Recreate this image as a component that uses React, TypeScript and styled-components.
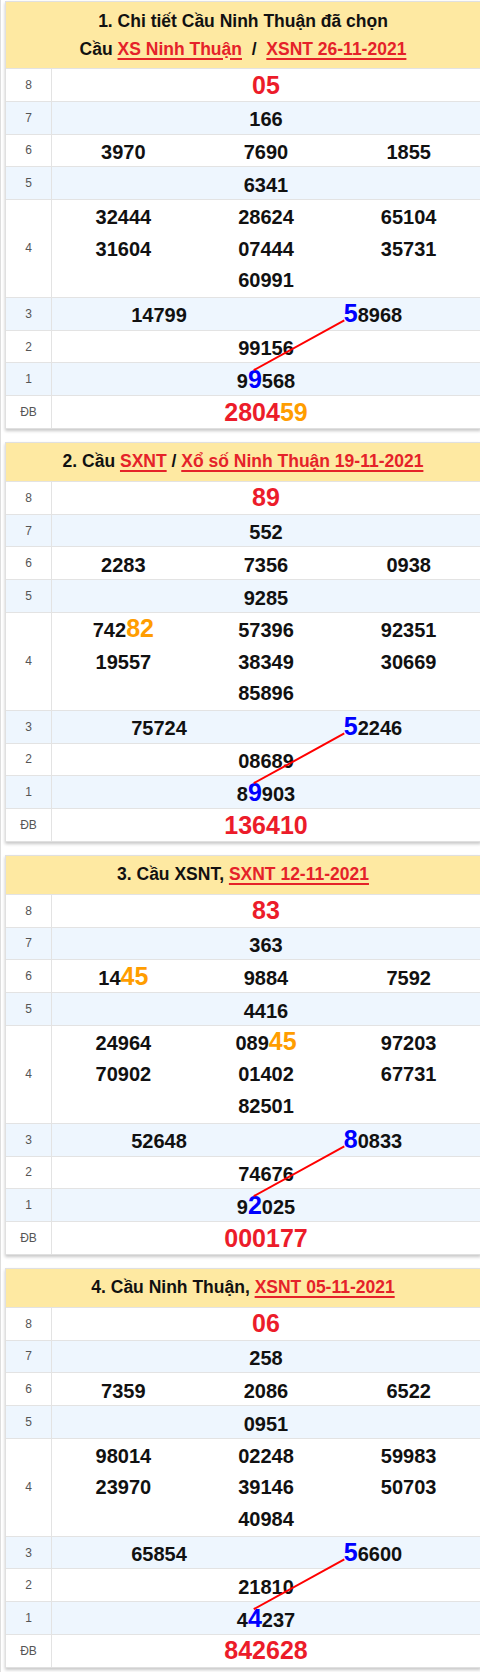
import React, { useLayoutEffect, useRef, useState } from "react";
import styled, { createGlobalStyle, css } from "styled-components";

type Tone = "red" | "orange" | "from" | "to";
type Seg = { t: string; tone?: Tone };
type Num = Seg[];
type RowData = { label: string; cols: 1 | 2 | 3; multi?: boolean; nums: Num[] };
type TitlePart = { text: string; link?: boolean };
type CardData = { lines: TitlePart[][]; rows: RowData[] };

const p = (t: string): Num => [{ t }];
const red = (t: string): Num => [{ t, tone: "red" }];
const mark = (pre: string, mid: string, post: string, tone: Tone): Num =>
  [{ t: pre }, { t: mid, tone }, { t: post }].filter((s) => s.t.length > 0);

const cards: CardData[] = [
  {
    lines: [
      [{ text: "1. Chi tiết Cầu Ninh Thuận đã chọn" }],
      [
        { text: "Cầu " },
        { text: "XS Ninh Thuận", link: true },
        { text: "\u00a0 /\u00a0 " },
        { text: "XSNT 26-11-2021", link: true },
      ],
    ],
    rows: [
      { label: "8", cols: 1, nums: [red("05")] },
      { label: "7", cols: 1, nums: [p("166")] },
      { label: "6", cols: 3, nums: [p("3970"), p("7690"), p("1855")] },
      { label: "5", cols: 1, nums: [p("6341")] },
      {
        label: "4",
        cols: 3,
        multi: true,
        nums: [p("32444"), p("28624"), p("65104"), p("31604"), p("07444"), p("35731"), p("60991")],
      },
      { label: "3", cols: 2, nums: [p("14799"), mark("", "5", "8968", "from")] },
      { label: "2", cols: 1, nums: [p("99156")] },
      { label: "1", cols: 1, nums: [mark("9", "9", "568", "to")] },
      { label: "ĐB", cols: 1, nums: [[{ t: "2804", tone: "red" }, { t: "59", tone: "orange" }]] },
    ],
  },
  {
    lines: [
      [
        { text: "2. Cầu " },
        { text: "SXNT", link: true },
        { text: " / " },
        { text: "Xổ số Ninh Thuận 19-11-2021", link: true },
      ],
    ],
    rows: [
      { label: "8", cols: 1, nums: [red("89")] },
      { label: "7", cols: 1, nums: [p("552")] },
      { label: "6", cols: 3, nums: [p("2283"), p("7356"), p("0938")] },
      { label: "5", cols: 1, nums: [p("9285")] },
      {
        label: "4",
        cols: 3,
        multi: true,
        nums: [mark("742", "82", "", "orange"), p("57396"), p("92351"), p("19557"), p("38349"), p("30669"), p("85896")],
      },
      { label: "3", cols: 2, nums: [p("75724"), mark("", "5", "2246", "from")] },
      { label: "2", cols: 1, nums: [p("08689")] },
      { label: "1", cols: 1, nums: [mark("8", "9", "903", "to")] },
      { label: "ĐB", cols: 1, nums: [red("136410")] },
    ],
  },
  {
    lines: [
      [
        { text: "3. Cầu XSNT, " },
        { text: "SXNT 12-11-2021", link: true },
      ],
    ],
    rows: [
      { label: "8", cols: 1, nums: [red("83")] },
      { label: "7", cols: 1, nums: [p("363")] },
      { label: "6", cols: 3, nums: [mark("14", "45", "", "orange"), p("9884"), p("7592")] },
      { label: "5", cols: 1, nums: [p("4416")] },
      {
        label: "4",
        cols: 3,
        multi: true,
        nums: [p("24964"), mark("089", "45", "", "orange"), p("97203"), p("70902"), p("01402"), p("67731"), p("82501")],
      },
      { label: "3", cols: 2, nums: [p("52648"), mark("", "8", "0833", "from")] },
      { label: "2", cols: 1, nums: [p("74676")] },
      { label: "1", cols: 1, nums: [mark("9", "2", "025", "to")] },
      { label: "ĐB", cols: 1, nums: [red("000177")] },
    ],
  },
  {
    lines: [
      [
        { text: "4. Cầu Ninh Thuận, " },
        { text: "XSNT 05-11-2021", link: true },
      ],
    ],
    rows: [
      { label: "8", cols: 1, nums: [red("06")] },
      { label: "7", cols: 1, nums: [p("258")] },
      { label: "6", cols: 3, nums: [p("7359"), p("2086"), p("6522")] },
      { label: "5", cols: 1, nums: [p("0951")] },
      {
        label: "4",
        cols: 3,
        multi: true,
        nums: [p("98014"), p("02248"), p("59983"), p("23970"), p("39146"), p("50703"), p("40984")],
      },
      { label: "3", cols: 2, nums: [p("65854"), mark("", "5", "6600", "from")] },
      { label: "2", cols: 1, nums: [p("21810")] },
      { label: "1", cols: 1, nums: [mark("4", "4", "237", "to")] },
      { label: "ĐB", cols: 1, nums: [red("842628")] },
    ],
  },
];

const GlobalStyle = createGlobalStyle`
  html, body {
    margin: 0;
    padding: 0;
    background: #ffffff;
    overflow-x: hidden;
  }
  body {
    font-family: "Liberation Sans", Arial, sans-serif;
    color: #111111;
  }
`;

const Page = styled.div`
  min-height: 1672px;
  box-sizing: border-box;
  border-left: 1px solid #dedede;
  padding: 1px 0 0 4px;
`;

const Card = styled.section`
  position: relative;
  width: 476px;
  box-sizing: border-box;
  background: #ffffff;
  border: 1px solid #e0e0e0;
  box-shadow: 0 2px 3px rgba(0, 0, 0, 0.22);
  margin-bottom: 13px;
`;

const Header = styled.div`
  background: #fee9a2;
  text-align: center;
  font-size: 17.5px;
  font-weight: 700;
  line-height: 28px;
  padding: 4.5px 0 5.5px;
  color: #111111;
`;

const TitleLine = styled.div`
  white-space: nowrap;
`;

const TitleLink = styled.a`
  color: #e52229;
  text-decoration: underline;
  text-decoration-thickness: 1.5px;
  text-underline-offset: 2.5px;
`;

const Row = styled.div<{ $alt: boolean }>`
  display: grid;
  grid-template-columns: 46px 1fr;
  border-top: 1px solid #e3e3e3;
  background: ${(p) => (p.$alt ? "#eef6fe" : "#ffffff")};
`;

const Label = styled.div`
  display: flex;
  align-items: center;
  justify-content: center;
  border-right: 1px solid #e3e3e3;
  font-size: 12px;
  color: #555555;
`;

const NumCell = styled.div<{ $multi: boolean }>`
  display: flex;
  flex-wrap: wrap;
  justify-content: center;
  align-items: center;
  padding: ${(p) => (p.$multi ? "0 0 2px" : "1.5px 0")};
`;

const Item = styled.div<{ $cols: number; $multi: boolean }>`
  width: ${(p) => 100 / p.$cols}%;
  height: ${(p) => (p.$multi ? "31.65px" : "28.75px")};
  text-align: center;
  font-size: 25px;
  font-weight: 700;
  line-height: ${(p) => (p.$multi ? "31.65px" : "28.75px")};
  white-space: nowrap;
`;

const toneStyles: Record<Tone, ReturnType<typeof css>> = {
  red: css`
    font-size: 25px;
    color: #ec1c2a;
  `,
  orange: css`
    font-size: 25px;
    color: #ff9d00;
  `,
  from: css`
    font-size: 25px;
    color: #0000ff;
  `,
  to: css`
    font-size: 25px;
    color: #0000ff;
  `,
};

const Digits = styled.span<{ $tone?: Tone }>`
  font-size: 20px;
  line-height: 1;
  color: #111111;
  ${(p) => (p.$tone ? toneStyles[p.$tone] : "")}
`;

const Overlay = styled.svg`
  position: absolute;
  left: 0;
  top: 0;
  width: 100%;
  height: 100%;
  pointer-events: none;
  overflow: visible;
`;

type Line = { x1: number; y1: number; x2: number; y2: number };

function ResultCard({ data }: { data: CardData }) {
  const cardRef = useRef<HTMLElement>(null);
  const fromRef = useRef<HTMLSpanElement>(null);
  const toRef = useRef<HTMLSpanElement>(null);
  const [line, setLine] = useState<Line | null>(null);

  useLayoutEffect(() => {
    const measure = () => {
      const card = cardRef.current;
      const a = fromRef.current;
      const b = toRef.current;
      if (!card || !a || !b) return;
      const c = card.getBoundingClientRect();
      const ox = c.left + card.clientLeft;
      const oy = c.top + card.clientTop;
      const ra = a.getBoundingClientRect();
      const rb = b.getBoundingClientRect();
      setLine({
        x1: ra.left - ox + 0.5,
        y1: ra.top - oy + ra.height * 0.752,
        x2: rb.left - ox + rb.width * 0.42,
        y2: rb.top - oy + rb.height * 0.19,
      });
    };
    measure();
    if (document.fonts && document.fonts.ready) {
      document.fonts.ready.then(measure);
    }
  }, []);

  return (
    <Card ref={cardRef}>
      <Header>
        {data.lines.map((parts, i) => (
          <TitleLine key={i}>
            {parts.map((part, j) =>
              part.link ? (
                <TitleLink key={j} href="#">
                  {part.text}
                </TitleLink>
              ) : (
                <React.Fragment key={j}>{part.text}</React.Fragment>
              )
            )}
          </TitleLine>
        ))}
      </Header>
      {data.rows.map((row, ri) => (
        <Row key={ri} $alt={ri % 2 === 1}>
          <Label>{row.label}</Label>
          <NumCell $multi={!!row.multi}>
            {row.nums.map((num, ni) => (
              <Item key={ni} $cols={row.cols} $multi={!!row.multi}>
                {num.map((seg, si) => (
                  <Digits
                    key={si}
                    $tone={seg.tone}
                    ref={seg.tone === "from" ? fromRef : seg.tone === "to" ? toRef : undefined}
                  >
                    {seg.t}
                  </Digits>
                ))}
              </Item>
            ))}
          </NumCell>
        </Row>
      ))}
      {line && (
        <Overlay>
          <line x1={line.x1} y1={line.y1} x2={line.x2} y2={line.y2} stroke="#ff0000" strokeWidth={2} />
        </Overlay>
      )}
    </Card>
  );
}

export default function App() {
  return (
    <>
      <GlobalStyle />
      <Page>
        {cards.map((c, i) => (
          <ResultCard key={i} data={c} />
        ))}
      </Page>
    </>
  );
}
